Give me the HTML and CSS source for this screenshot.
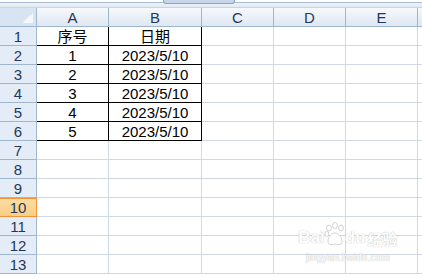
FILE: index.html
```html
<!DOCTYPE html>
<html lang="zh-CN">
<head>
    <meta charset="UTF-8">
    <title>Sheet1</title>
    <link rel="stylesheet" href="styles.css">
</head>
<body>
    <div class="topbar">
        <div class="thumb"></div>
    </div>
    <div class="sheet">
        <div class="grid">
            <div class="corner"></div>
            <div class="colhead">A</div>
            <div class="colhead">B</div>
            <div class="colhead">C</div>
            <div class="colhead">D</div>
            <div class="colhead">E</div>
            <div class="colhead rest"></div>

            <div class="rowhead">1</div>
            <div class="cell boxed">序号</div>
            <div class="cell boxed">日期</div>
            <div class="cell"></div><div class="cell"></div><div class="cell"></div><div class="cell rest"></div>

            <div class="rowhead">2</div>
            <div class="cell boxed">1</div>
            <div class="cell boxed">2023/5/10</div>
            <div class="cell"></div><div class="cell"></div><div class="cell"></div><div class="cell rest"></div>

            <div class="rowhead">3</div>
            <div class="cell boxed">2</div>
            <div class="cell boxed">2023/5/10</div>
            <div class="cell"></div><div class="cell"></div><div class="cell"></div><div class="cell rest"></div>

            <div class="rowhead">4</div>
            <div class="cell boxed">3</div>
            <div class="cell boxed">2023/5/10</div>
            <div class="cell"></div><div class="cell"></div><div class="cell"></div><div class="cell rest"></div>

            <div class="rowhead">5</div>
            <div class="cell boxed">4</div>
            <div class="cell boxed">2023/5/10</div>
            <div class="cell"></div><div class="cell"></div><div class="cell"></div><div class="cell rest"></div>

            <div class="rowhead">6</div>
            <div class="cell boxed">5</div>
            <div class="cell boxed">2023/5/10</div>
            <div class="cell"></div><div class="cell"></div><div class="cell"></div><div class="cell rest"></div>

            <div class="rowhead">7</div>
            <div class="cell"></div><div class="cell"></div><div class="cell"></div><div class="cell"></div><div class="cell"></div><div class="cell rest"></div>
            <div class="rowhead">8</div>
            <div class="cell"></div><div class="cell"></div><div class="cell"></div><div class="cell"></div><div class="cell"></div><div class="cell rest"></div>
            <div class="rowhead">9</div>
            <div class="cell"></div><div class="cell"></div><div class="cell"></div><div class="cell"></div><div class="cell"></div><div class="cell rest"></div>
            <div class="rowhead active">10</div>
            <div class="cell"></div><div class="cell"></div><div class="cell"></div><div class="cell"></div><div class="cell"></div><div class="cell rest"></div>
            <div class="rowhead">11</div>
            <div class="cell"></div><div class="cell"></div><div class="cell"></div><div class="cell"></div><div class="cell"></div><div class="cell rest"></div>
            <div class="rowhead">12</div>
            <div class="cell"></div><div class="cell"></div><div class="cell"></div><div class="cell"></div><div class="cell"></div><div class="cell rest"></div>
            <div class="rowhead">13</div>
            <div class="cell"></div><div class="cell"></div><div class="cell"></div><div class="cell"></div><div class="cell"></div><div class="cell rest"></div>
        </div>

        <div class="watermark">
            <div class="wm-logo">
                <span>Bai</span>
                <svg class="paw" width="22" height="24" viewBox="0 0 22 24">
                    <ellipse cx="5" cy="6" rx="2.4" ry="3" />
                    <ellipse cx="11" cy="3.5" rx="2.4" ry="3" />
                    <ellipse cx="17" cy="6" rx="2.4" ry="3" />
                    <ellipse cx="2.8" cy="12" rx="2" ry="2.6" />
                    <path d="M4 20 C4 14 8 11 11 11 C14 11 18 14 18 20 C18 23 15 23 11 22 C7 23 4 23 4 20 Z" />
                </svg>
                <span>du</span>
                <span class="wm-cn">经验</span>
            </div>
            <div class="wm-url">jingyan.baidu.com</div>
        </div>
    </div>
</body>
</html>
```

FILE: styles.css
```css
body {
    margin: 0;
    width: 422px;
    height: 277px;
    overflow: hidden;
    background: #ffffff;
    font-family: "Liberation Sans", Arial, "Noto Sans CJK SC", sans-serif;
}

.topbar {
    position: relative;
    height: 8px;
    box-sizing: border-box;
    border-top: 2px solid #ffffff;
    border-bottom: 1px solid #c9d5e4;
    background: linear-gradient(#a9bcd3 0, #a9bcd3 1px, #eef2f8 1px, #e3eaf4 100%);
}

.topbar .thumb {
    position: absolute;
    left: 163px;
    top: -2px;
    width: 72px;
    height: 4px;
    box-sizing: border-box;
    border: 1px solid #8ea6c4;
    border-top: none;
    border-radius: 0 0 3px 3px;
    background: #c7d6ea;
}

.sheet {
    position: relative;
}

.grid {
    display: grid;
    grid-template-columns: 37px 72px 93px 72px 72px 72px 1fr;
    grid-auto-rows: 19px;
}

.grid > div {
    box-sizing: border-box;
    display: flex;
    align-items: center;
    justify-content: center;
    font-size: 15px;
    line-height: 1;
}

.corner {
    background: #d9e4f2;
    border-right: 1px solid #9eb6ce;
    border-bottom: 1px solid #9eb6ce;
    position: relative;
}

.corner::after {
    content: "";
    position: absolute;
    right: 3px;
    bottom: 3px;
    width: 10px;
    height: 10px;
    background: linear-gradient(135deg, transparent 50%, #f4f7fb 50%);
}

.colhead {
    background: linear-gradient(#f6f9fc, #dfe7f2);
    border-right: 1px solid #9eb6ce;
    border-bottom: 1px solid #9eb6ce;
    color: #1e395b;
    padding-top: 1px;
}

.colhead.rest {
    border-right: none;
}

.rowhead {
    background: #e4ecf7;
    border-right: 1px solid #9eb6ce;
    border-bottom: 1px solid #9eb6ce;
    color: #1e395b;
}

.rowhead.active {
    background: linear-gradient(#fbdca2, #f8cf86);
    border: 1px solid #f29436;
    border-left: none;
}

.cell {
    border-right: 1px solid #d0d7e5;
    border-bottom: 1px solid #d0d7e5;
    color: #000000;
}

.cell.rest {
    border-right: none;
}

.cell.boxed {
    border-right-color: #000000;
    border-bottom-color: #000000;
}

.watermark {
    position: absolute;
    left: 296px;
    top: 214px;
    width: 104px;
    color: #ffffff;
    text-shadow: 0 0 1px #c4c4c4, 0 0 1px #c4c4c4;
    text-align: center;
    white-space: nowrap;
}

.wm-logo {
    display: flex;
    align-items: flex-end;
    justify-content: center;
    font-size: 17px;
    font-weight: bold;
    line-height: 1;
}

.wm-logo .paw {
    fill: #ffffff;
    stroke: #c8c8c8;
    stroke-width: 0.8;
    margin: 0 -1px;
}

.wm-cn {
    font-size: 15px;
    margin-left: 2px;
    font-family: "Noto Sans CJK SC", sans-serif;
}

.wm-url {
    font-size: 10px;
    margin-top: 6px;
    letter-spacing: 0.2px;
}
```
